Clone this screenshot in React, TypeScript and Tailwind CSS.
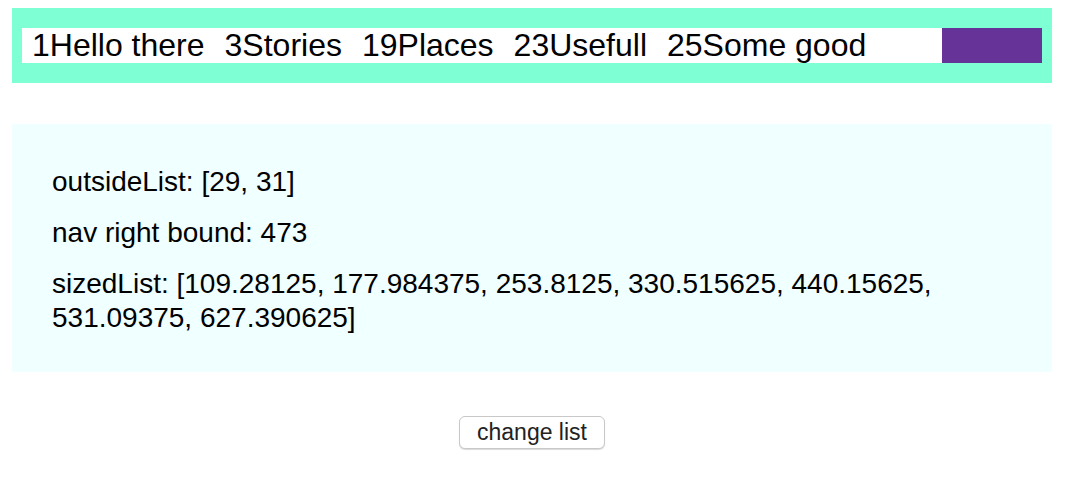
const items = ["1Hello there", "3Stories", "19Places", "23Usefull", "25Some good"];

export default function App() {
    return (
        <div className="min-h-screen bg-white pt-2 pr-1 font-['Liberation_Sans',Arial,sans-serif] text-black">
            <nav className="mx-3 flex bg-[#7fffd4] px-[10px] py-5">
                <ul className="flex h-[35px] flex-1 items-center overflow-hidden whitespace-nowrap bg-white pl-[10px] text-[32px] leading-[35px]">
                    {items.map((item) => (
                        <li key={item} className="mr-5 shrink-0">
                            {item}
                        </li>
                    ))}
                </ul>
                <div className="h-[35px] w-[100px] bg-[#663399]"></div>
            </nav>

            <div className="mx-3 mt-[41px] bg-[#f0ffff] px-10 pt-[41px] pb-[37px] text-[28px] leading-[34px]">
                <p>outsideList: [29, 31]</p>
                <p className="mt-[17px]">nav right bound: 473</p>
                <p className="mt-[17px]">
                    sizedList: [109.28125, 177.984375, 253.8125, 330.515625, 440.15625, 531.09375, 627.390625]
                </p>
            </div>

            <div className="mt-11 flex justify-center">
                <button className="h-[33px] w-[146px] rounded-md border border-[#c8c8c8] bg-white text-[23px] leading-[31px] text-[#222] shadow-[0_1px_1px_rgba(0,0,0,0.15)]">
                    change list
                </button>
            </div>
        </div>
    );
}
